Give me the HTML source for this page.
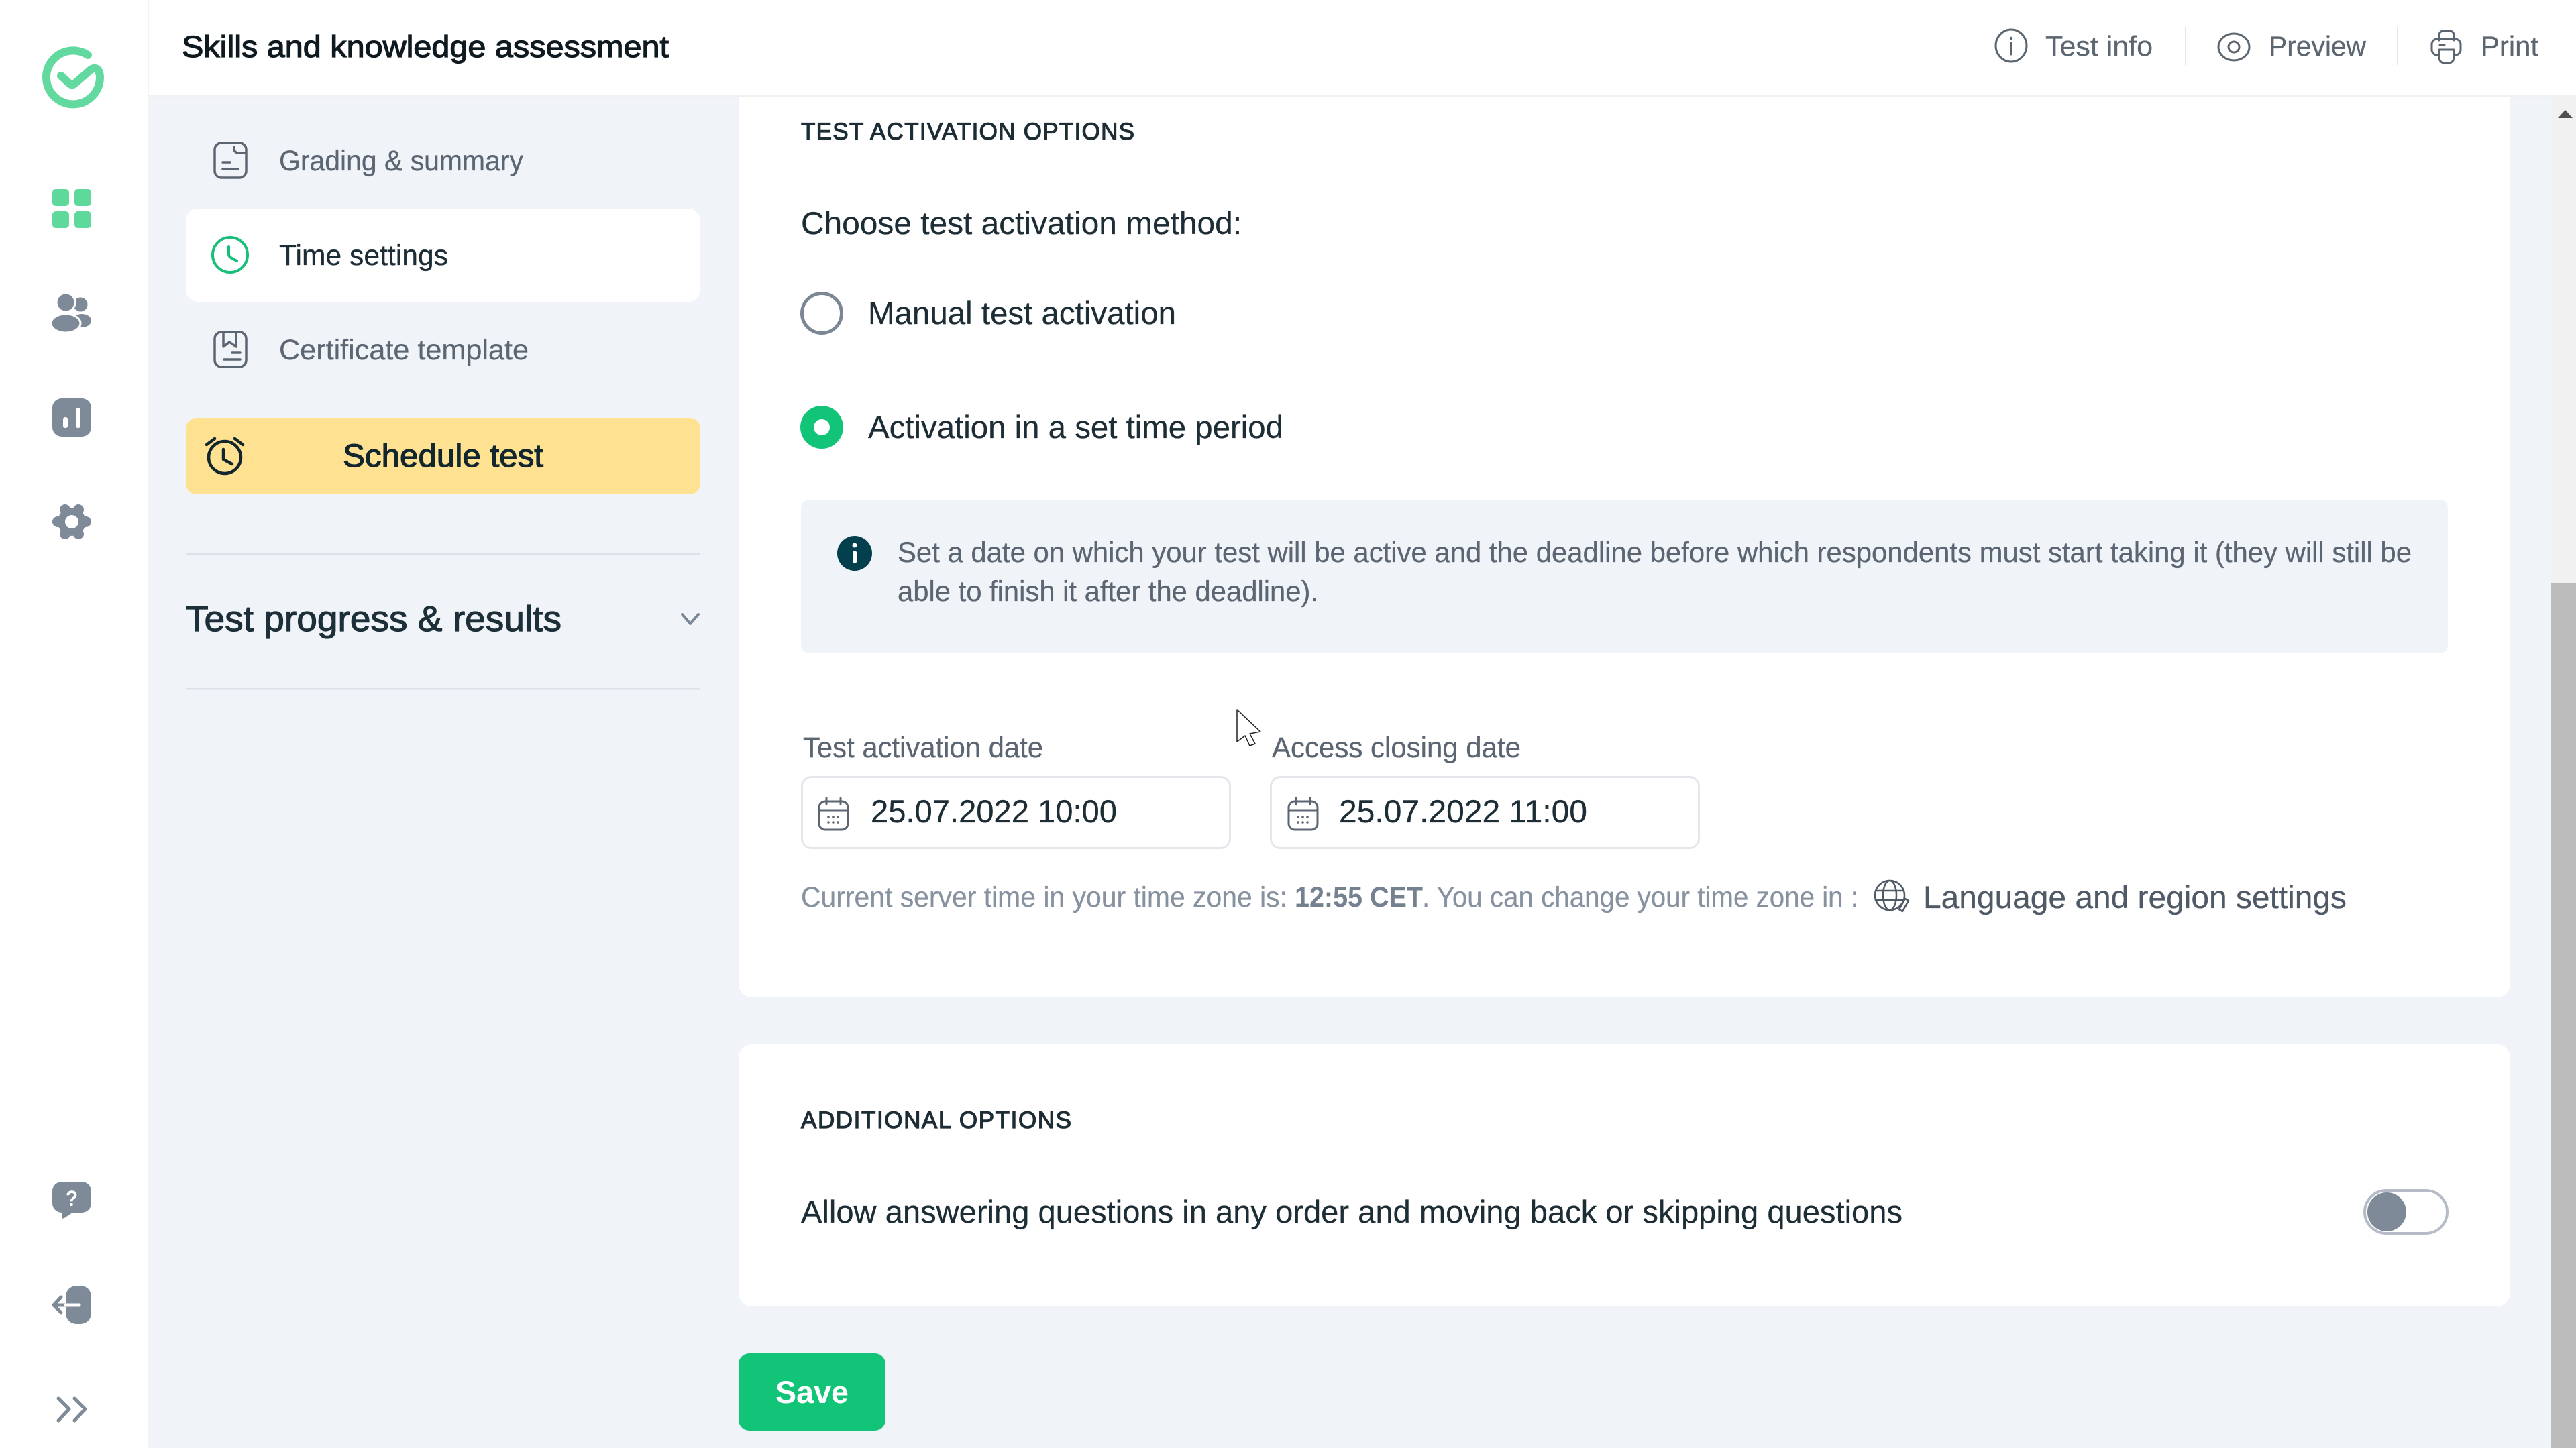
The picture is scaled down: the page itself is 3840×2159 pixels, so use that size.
<!DOCTYPE html>
<html lang="en">
<head>
<meta charset="utf-8">
<title>Skills and knowledge assessment</title>
<style>
html,body{margin:0;padding:0;width:3840px;height:2159px;overflow:hidden;background:#f0f4f9}
svg{display:block}
text{font-family:"Liberation Sans",sans-serif;white-space:pre;stroke:currentColor;stroke-width:.3px}
text.m{stroke-width:1.2px}
text.b{stroke-width:0}
.ol{fill:none;stroke-linecap:round;stroke-linejoin:round}
</style>
</head>
<body>
<svg xmlns="http://www.w3.org/2000/svg" width="3840" height="2159" viewBox="0 0 3840 2159">
<rect width="3840" height="2159" fill="#f0f4f9"/>

<!-- scrollbar -->
<rect x="3803" y="142" width="37" height="2017" fill="#f1f1f1"/>
<rect x="3803" y="869" width="37" height="1290" fill="#bcbcbc"/>
<polygon points="3824,164 3835,176 3813,176" fill="#505050"/>

<!-- cards -->
<path d="M1101 100H3742V1467a20 20 0 0 1-20 20H1121a20 20 0 0 1-20-20Z" fill="#fff"/>
<rect x="1101" y="1557" width="2641" height="391" rx="20" fill="#fff"/>

<!-- header + rail -->
<rect x="0" y="0" width="3840" height="142" fill="#fff"/>
<rect x="220" y="142" width="3620" height="2" fill="#f0f0f0"/>
<rect x="0" y="0" width="220" height="2159" fill="#fff"/>
<rect x="220" y="0" width="2" height="2159" fill="#f2f3f5"/>

<!-- logo -->
<path class="ol" d="M131 82A40 40 0 1 0 149 116C149 103 142 98 134 105L112 124C109 127 106 127 103 124L91 113" stroke="#62d99e" stroke-width="12"/>

<!-- rail icons -->
<g fill="#5fd99b">
<rect x="78" y="282" width="25" height="25" rx="5"/><rect x="111" y="282" width="25" height="25" rx="5"/>
<rect x="78" y="315" width="25" height="25" rx="5"/><rect x="111" y="315" width="25" height="25" rx="5"/>
</g>
<g fill="#7f8a98">
<circle cx="120" cy="454" r="10.5"/>
<ellipse cx="122" cy="478" rx="14" ry="10"/>
<circle cx="98" cy="451" r="14" stroke="#fff" stroke-width="3"/>
<ellipse cx="98" cy="482" rx="22" ry="14" stroke="#fff" stroke-width="3"/>
<rect x="78" y="594" width="58" height="57" rx="14"/>
<circle cx="107" cy="778" r="21"/>
<circle cx="128" cy="778" r="8"/><circle cx="86" cy="778" r="8"/>
<circle cx="117" cy="760" r="8"/><circle cx="97" cy="760" r="8"/>
<circle cx="117" cy="796" r="8"/><circle cx="97" cy="796" r="8"/>
<path d="M92 1762H122a14 14 0 0 1 14 14V1794a14 14 0 0 1-14 14H108L96 1816Q92 1818 92 1813V1808A14 14 0 0 1 78 1794V1776A14 14 0 0 1 92 1762Z"/>
<rect x="98" y="1917" width="38" height="57" rx="16"/>
</g>
<rect x="94" y="622" width="7" height="16" rx="3" fill="#fff"/>
<rect x="113" y="608" width="7" height="30" rx="3" fill="#fff"/>
<circle cx="107" cy="778" r="10" fill="#fff"/>
<text class="b" x="98" y="1798" font-size="32" font-weight="700" fill="#fff" textLength="18" lengthAdjust="spacingAndGlyphs">?</text>
<path class="ol" d="M80 1946H98M91 1934L80 1946L91 1957" stroke="#7f8a98" stroke-width="5"/>
<path class="ol" d="M98 1946H118" stroke="#fff" stroke-width="5"/>
<path class="ol" d="M87 2085L103 2101L87 2118M111 2085L127 2101L111 2118" stroke="#7f8a98" stroke-width="5"/>

<!-- title -->
<text class="m" x="271" y="85" font-size="45" fill="#0f1a20" color="#0f1a20" textLength="726" lengthAdjust="spacingAndGlyphs">Skills and knowledge assessment</text>

<!-- header right -->
<g class="ol" stroke="#5b6670" stroke-width="3">
<ellipse cx="2998" cy="68" rx="23" ry="24"/>
<path d="M2998 64V81"/>
<ellipse cx="3330" cy="70" rx="23" ry="20"/>
<ellipse cx="3330" cy="70" rx="8" ry="8"/>
<path d="M3636 60V52a6 6 0 0 1 6-6h10a6 6 0 0 1 6 6v8"/>
<path d="M3636 82H3633a8 8 0 0 1-8-8V66a8 8 0 0 1 8-8H3660a8 8 0 0 1 8 8V74a8 8 0 0 1-8 8H3658"/>
<path d="M3636 74H3658V86a8 8 0 0 1-8 8H3644a8 8 0 0 1-8-8Z"/>
<path d="M3637 67H3644"/>
</g>
<circle cx="2998" cy="57" r="2.2" fill="#5b6670"/>
<rect x="3257" y="41" width="2" height="56" fill="#e2e8ea"/>
<rect x="3573" y="41" width="2" height="56" fill="#e2e8ea"/>
<g color="#5b6670">
<text x="3049" y="83" font-size="42" fill="#5b6670" textLength="160" lengthAdjust="spacingAndGlyphs">Test info</text>
<text x="3382" y="83" font-size="42" fill="#5b6670" textLength="145" lengthAdjust="spacingAndGlyphs">Preview</text>
<text x="3698" y="83" font-size="42" fill="#5b6670" textLength="86" lengthAdjust="spacingAndGlyphs">Print</text>
</g>

<!-- sidebar -->
<rect x="277" y="311" width="767" height="139" rx="18" fill="#fff"/>
<rect x="277" y="623" width="767" height="114" rx="16" fill="#ffe291"/>
<rect x="277" y="825" width="767" height="2.5" fill="#dde2e8"/>
<rect x="277" y="1026" width="767" height="2.5" fill="#dde2e8"/>

<g class="ol" stroke="#5c6673" stroke-width="3.5">
<rect x="320" y="213" width="47" height="52" rx="10"/>
<path d="M349 219V222a6 6 0 0 0 6 6H366"/>
<path d="M332 242H343M332 252H355"/>
<rect x="320" y="495" width="47" height="52" rx="10"/>
<path d="M333 495V517L342 510L352 517V495"/>
<path d="M346 526H358M334 536H358"/>
</g>
<g class="ol" stroke="#17bf78" stroke-width="4">
<circle cx="343" cy="380" r="26"/>
<path d="M341 368V379Q341 382 344 384L353 389"/>
</g>
<g class="ol" stroke="#12262e" stroke-width="4.5">
<circle cx="335" cy="682" r="24"/>
<path d="M333 670V685L346 692"/>
<path d="M308 663L320 654M350 654L362 663"/>
</g>

<text x="416" y="254" font-size="43" fill="#5c6673" color="#5c6673" textLength="364" lengthAdjust="spacingAndGlyphs">Grading &amp; summary</text>
<text x="416" y="395" font-size="43" fill="#1d2d35" color="#1d2d35" textLength="252" lengthAdjust="spacingAndGlyphs">Time settings</text>
<text x="416" y="536" font-size="43" fill="#5c6673" color="#5c6673" textLength="372" lengthAdjust="spacingAndGlyphs">Certificate template</text>
<text class="m" x="511" y="696" font-size="48" fill="#12262e" color="#12262e" textLength="299" lengthAdjust="spacingAndGlyphs">Schedule test</text>
<text class="m" x="277" y="941" font-size="54" fill="#1d2f38" color="#1d2f38" textLength="560" lengthAdjust="spacingAndGlyphs">Test progress &amp; results</text>
<path class="ol" d="M1017 916L1029 930L1041 916" stroke="#7b8794" stroke-width="4"/>

<!-- main section -->
<text class="m" x="1194" y="208" font-size="35" fill="#1d2d35" color="#1d2d35" textLength="497" lengthAdjust="spacing">TEST ACTIVATION OPTIONS</text>
<text x="1194" y="349" font-size="47" fill="#1d2d35" color="#1d2d35" textLength="657" lengthAdjust="spacingAndGlyphs">Choose test activation method:</text>

<circle cx="1225" cy="467" r="29.5" fill="#fff" stroke="#7b8794" stroke-width="5"/>
<text x="1294" y="483" font-size="47" fill="#1d2d35" color="#1d2d35" textLength="459" lengthAdjust="spacingAndGlyphs">Manual test activation</text>

<circle cx="1225" cy="637" r="32" fill="#12c477"/>
<circle cx="1225" cy="637" r="12" fill="#fff"/>
<text x="1294" y="653" font-size="47" fill="#1d2d35" color="#1d2d35" textLength="619" lengthAdjust="spacingAndGlyphs">Activation in a set time period</text>

<rect x="1194" y="745" width="2455" height="229" rx="12" fill="#f0f4f9"/>
<circle cx="1274" cy="825" r="26" fill="#033f4c"/>
<rect x="1271" y="822" width="6" height="17" rx="1.5" fill="#fff"/>
<circle cx="1274" cy="813" r="3.5" fill="#fff"/>
<text x="1338" y="838" font-size="43" fill="#5c6673" color="#5c6673" textLength="2257" lengthAdjust="spacingAndGlyphs">Set a date on which your test will be active and the deadline before which respondents must start taking it (they will still be</text>
<text x="1338" y="896" font-size="43" fill="#5c6673" color="#5c6673" textLength="627" lengthAdjust="spacingAndGlyphs">able to finish it after the deadline).</text>

<text x="1197" y="1129" font-size="43" fill="#5c6673" color="#5c6673" textLength="358" lengthAdjust="spacingAndGlyphs">Test activation date</text>
<text x="1896" y="1129" font-size="43" fill="#5c6673" color="#5c6673" textLength="371" lengthAdjust="spacingAndGlyphs">Access closing date</text>

<rect x="1195.5" y="1158.5" width="638" height="106" rx="14" fill="#fff" stroke="#e3e6ea" stroke-width="3"/>
<rect x="1894.5" y="1158.5" width="638" height="106" rx="14" fill="#fff" stroke="#e3e6ea" stroke-width="3"/>

<g class="ol" stroke="#5c6673" stroke-width="3">
<rect x="1221" y="1195" width="43" height="42" rx="9"/>
<path d="M1221 1208H1264M1232 1190V1199M1253 1190V1199"/>
<rect x="1921" y="1195" width="43" height="42" rx="9"/>
<path d="M1921 1208H1964M1932 1190V1199M1953 1190V1199"/>
</g>
<g fill="#5c6673">
<circle cx="1235" cy="1218" r="1.8"/><circle cx="1242" cy="1218" r="1.8"/><circle cx="1249" cy="1218" r="1.8"/>
<circle cx="1235" cy="1226" r="1.8"/><circle cx="1242" cy="1226" r="1.8"/><circle cx="1249" cy="1226" r="1.8"/>
<circle cx="1935" cy="1218" r="1.8"/><circle cx="1942" cy="1218" r="1.8"/><circle cx="1949" cy="1218" r="1.8"/>
<circle cx="1935" cy="1226" r="1.8"/><circle cx="1942" cy="1226" r="1.8"/><circle cx="1949" cy="1226" r="1.8"/>
</g>
<text x="1298" y="1226" font-size="47" fill="#1d2d35" color="#1d2d35" textLength="367" lengthAdjust="spacingAndGlyphs">25.07.2022 10:00</text>
<text x="1996" y="1226" font-size="47" fill="#1d2d35" color="#1d2d35" textLength="370" lengthAdjust="spacingAndGlyphs">25.07.2022 11:00</text>

<!-- cursor -->
<polygon points="1844,1058 1844,1106 1856,1097 1863,1112 1871,1109 1863,1094 1879,1091" fill="#fff" stroke="#222" stroke-width="1.5" stroke-linejoin="round"/>

<text x="1194" y="1352" font-size="43" fill="#8792a0" color="#8792a0" textLength="725" lengthAdjust="spacingAndGlyphs">Current server time in your time zone is:</text>
<text class="b" x="1930" y="1352" font-size="43" font-weight="700" fill="#75818f" textLength="191" lengthAdjust="spacingAndGlyphs">12:55 CET</text>
<text x="2120" y="1352" font-size="43" fill="#8792a0" color="#8792a0" textLength="650" lengthAdjust="spacingAndGlyphs">. You can change your time zone in :</text>

<g class="ol" stroke="#4f5a66" stroke-width="2.5">
<circle cx="2817" cy="1335" r="22"/>
<ellipse cx="2817" cy="1335" rx="10" ry="22"/>
<path d="M2796 1328H2838M2796 1342H2838"/>
<path d="M2831 1356L2840 1340L2845 1343L2836 1359Z" fill="#fff"/>
</g>
<text x="2867" y="1354" font-size="47" fill="#4f5a66" color="#4f5a66" textLength="631" lengthAdjust="spacingAndGlyphs">Language and region settings</text>

<!-- additional options -->
<text class="m" x="1194" y="1682" font-size="35" fill="#1d2d35" color="#1d2d35" textLength="403" lengthAdjust="spacing">ADDITIONAL OPTIONS</text>
<text x="1194" y="1823" font-size="47" fill="#1d2d35" color="#1d2d35" textLength="1642" lengthAdjust="spacingAndGlyphs">Allow answering questions in any order and moving back or skipping questions</text>

<rect x="3525" y="1775" width="123" height="64" rx="32" fill="#fff" stroke="#b5bcc5" stroke-width="4"/>
<circle cx="3558" cy="1807" r="29" fill="#7f8a98"/>

<!-- save -->
<rect x="1101" y="2018" width="219" height="115" rx="16" fill="#12c477"/>
<text class="b" x="1156" y="2092" font-size="47" font-weight="700" fill="#fff" textLength="109" lengthAdjust="spacingAndGlyphs">Save</text>
</svg>
</body>
</html>
